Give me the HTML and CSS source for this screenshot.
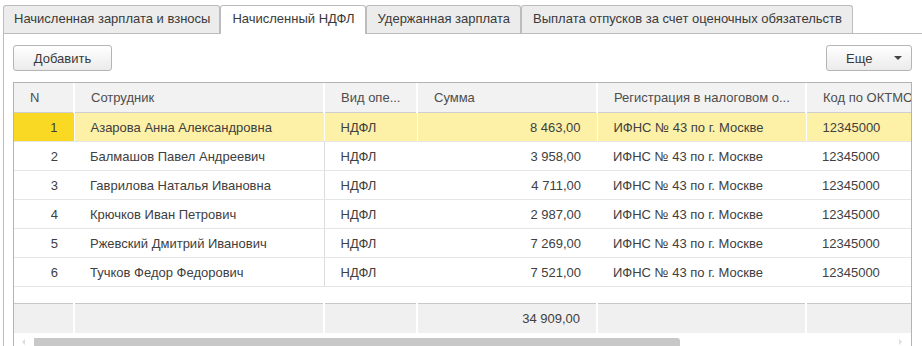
FILE: index.html
```html
<!DOCTYPE html>
<html>

<head>
    <meta charset="utf-8">
    <title>Начисленный НДФЛ</title>
    <link rel="stylesheet" href="styles.css">
</head>

<body>
    <div class="tabs">
        <div class="tab">Начисленная зарплата и взносы</div>
        <div class="tab active">Начисленный НДФЛ</div>
        <div class="tab">Удержанная зарплата</div>
        <div class="tab">Выплата отпусков за счет оценочных обязательств</div>
    </div>

    <div class="panel">
        <div class="toolbar">
            <button class="button add">Добавить</button>
            <button class="button more">Еще <span class="arrow"></span></button>
        </div>

        <div class="grid">
            <table class="table">
                <colgroup>
                    <col style="width:60px">
                    <col style="width:250px">
                    <col style="width:93px">
                    <col style="width:180px">
                    <col style="width:209px">
                    <col style="width:140px">
                </colgroup>
                <thead>
                    <tr>
                        <th>N</th>
                        <th>Сотрудник</th>
                        <th>Вид опе...</th>
                        <th>Сумма</th>
                        <th>Регистрация в налоговом о...</th>
                        <th>Код по ОКТМО</th>
                    </tr>
                </thead>
                <tbody>
                    <tr class="selected">
                        <td class="num">1</td>
                        <td class="split">Азарова Анна Александровна</td>
                        <td>НДФЛ</td>
                        <td class="num">8 463,00</td>
                        <td>ИФНС № 43 по г. Москве</td>
                        <td>12345000</td>
                    </tr>
                    <tr>
                        <td class="num">2</td>
                        <td class="split">Балмашов Павел Андреевич</td>
                        <td>НДФЛ</td>
                        <td class="num">3 958,00</td>
                        <td>ИФНС № 43 по г. Москве</td>
                        <td>12345000</td>
                    </tr>
                    <tr>
                        <td class="num">3</td>
                        <td class="split">Гаврилова Наталья Ивановна</td>
                        <td>НДФЛ</td>
                        <td class="num">4 711,00</td>
                        <td>ИФНС № 43 по г. Москве</td>
                        <td>12345000</td>
                    </tr>
                    <tr>
                        <td class="num">4</td>
                        <td class="split">Крючков Иван Петрович</td>
                        <td>НДФЛ</td>
                        <td class="num">2 987,00</td>
                        <td>ИФНС № 43 по г. Москве</td>
                        <td>12345000</td>
                    </tr>
                    <tr>
                        <td class="num">5</td>
                        <td class="split">Ржевский Дмитрий Иванович</td>
                        <td>НДФЛ</td>
                        <td class="num">7 269,00</td>
                        <td>ИФНС № 43 по г. Москве</td>
                        <td>12345000</td>
                    </tr>
                    <tr>
                        <td class="num">6</td>
                        <td class="split">Тучков Федор Федорович</td>
                        <td>НДФЛ</td>
                        <td class="num">7 521,00</td>
                        <td>ИФНС № 43 по г. Москве</td>
                        <td>12345000</td>
                    </tr>
                    <tr class="empty">
                        <td colspan="6"></td>
                    </tr>
                </tbody>
                <tfoot>
                    <tr>
                        <td></td>
                        <td></td>
                        <td></td>
                        <td class="num">34 909,00</td>
                        <td></td>
                        <td></td>
                    </tr>
                </tfoot>
            </table>
            <div class="scrollbar">
                <span class="scroll-left"></span>
                <div class="thumb"></div>
                <span class="scroll-right"></span>
            </div>
        </div>
    </div>
</body>

</html>
```

FILE: styles.css
```css
html, body {
    font-family: "Liberation Sans", Arial, sans-serif;
    font-size: 13px;
    color: #404040;
    background: #ffffff;
}

body {
    margin: 0;
    padding: 0;
    overflow: hidden;
}

/* tabs */
.tabs {
    display: flex;
    margin: 5px 0 0 3px;
    height: 28px;
}

.tab {
    box-sizing: border-box;
    height: 28px;
    padding: 0 9px 0 10px;
    line-height: 26px;
    background: #ececec;
    border: 1px solid #bcbcbc;
    border-bottom: none;
    border-radius: 3px 3px 0 0;
    color: #3a3a3a;
    white-space: nowrap;
}

.tab + .tab {
    padding-left: 11px;
    padding-right: 10px;
}

.tab.active {
    background: #ffffff;
    height: 29px;
    margin-bottom: -1px;
    position: relative;
}

/* panel */
.panel {
    margin-left: 3px;
    border-top: 1px solid #bcbcbc;
    border-left: 1px solid #bcbcbc;
    padding: 11px 10px 0 9px;
}

.toolbar {
    display: flex;
    justify-content: space-between;
    height: 26px;
    margin-bottom: 11px;
}

.button {
    box-sizing: border-box;
    height: 26px;
    border: 1px solid #b5b5b5;
    border-radius: 3px;
    background: linear-gradient(#ffffff, #ebebeb);
    font-family: inherit;
    font-size: 13px;
    color: #3a3a3a;
    padding: 0;
}

.add {
    width: 99px;
}

.more {
    width: 86px;
    display: flex;
    align-items: center;
    padding-left: 19px;
}

.arrow {
    margin-left: 22px;
    width: 0;
    height: 0;
    border-left: 4px solid transparent;
    border-right: 4px solid transparent;
    border-top: 4px solid #444444;
}

/* grid */
.grid {
    border: 1px solid #b3b3b3;
    overflow: hidden;
    height: 300px;
}

.table {
    border-collapse: collapse;
    table-layout: fixed;
    width: 932px;
}

.table th,
.table td {
    padding: 0 16px;
    text-align: left;
    white-space: nowrap;
    overflow: hidden;
    font-weight: normal;
}

.table th {
    height: 29px;
    background: #f2f2f2;
    border-right: 2px solid #ffffff;
    border-bottom: 1px solid #cfcfcf;
    color: #4d4d4d;
}

.table tbody td {
    height: 27px;
    padding-top: 1px;
    border-bottom: 1px solid #e6e6e6;
}

.table tbody td.split {
    border-right: 1px solid #dcdcdc;
}

.table td.num {
    text-align: right;
}

.table tr.selected td {
    background: #fdf1a8;
    border-right: 1px solid #ffffff;
}

.table tr.selected td:first-child {
    background: #fad924;
}

.table tr.empty td {
    height: 16px;
    padding-top: 0;
    border-bottom: 1px solid #c8c8c8;
}

.table tfoot td {
    height: 29px;
    background: #f0f0f0;
    border-right: 2px solid #ffffff;
}

.scrollbar {
    display: flex;
    align-items: flex-end;
    height: 13px;
    position: relative;
}

.thumb {
    margin-left: 20px;
    width: 646px;
    height: 8px;
    background: #c8c8c8;
    border-radius: 0 3px 0 0;
}

.scroll-left {
    position: absolute;
    left: 8px;
    bottom: 1px;
    border-top: 3px solid transparent;
    border-bottom: 3px solid transparent;
    border-right: 3px solid #dddddd;
}

.scroll-right {
    position: absolute;
    left: 885px;
    bottom: 1px;
    border-top: 3px solid transparent;
    border-bottom: 3px solid transparent;
    border-left: 3px solid #dddddd;
}
```
